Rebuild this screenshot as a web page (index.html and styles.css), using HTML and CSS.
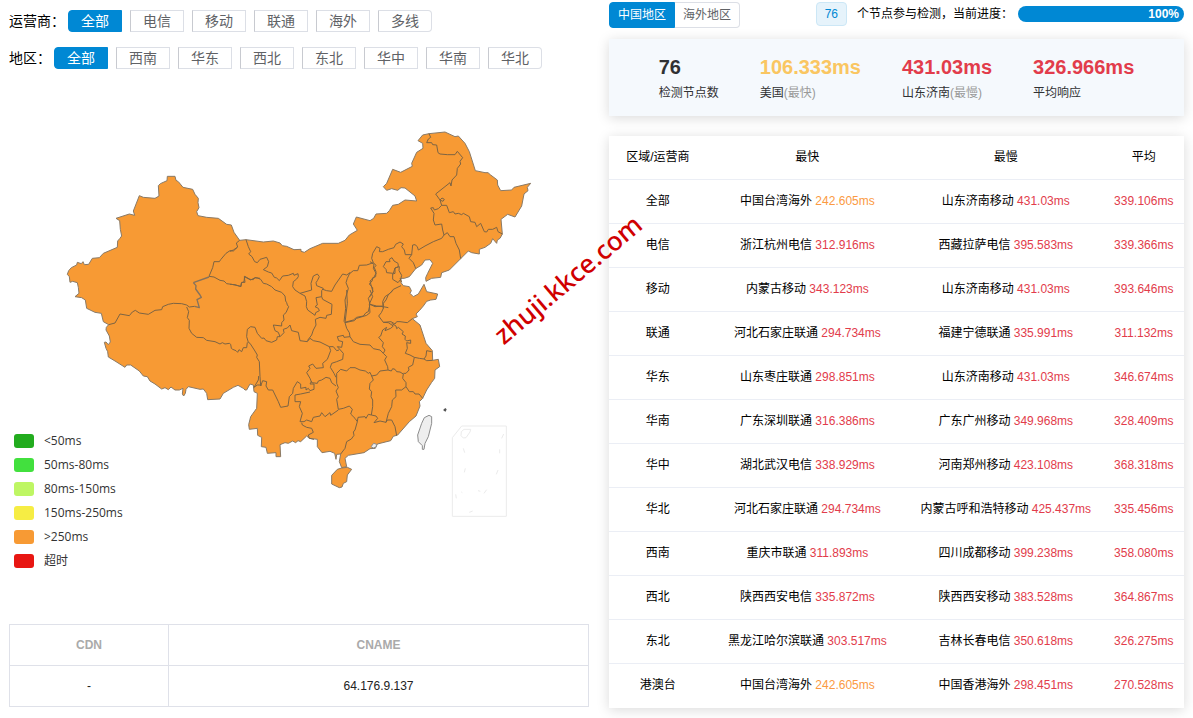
FILE: index.html
```html
<!DOCTYPE html>
<html lang="zh-CN">
<head>
<meta charset="utf-8">
<title>节点检测</title>
<link rel="stylesheet" href="styles.css">
</head>
<body>
<main class="page">
  <section class="left">
    <div class="filter">
      <span class="filter-label">运营商：</span>
      <div class="options">
        <button class="option active">全部</button><button class="option">电信</button><button class="option">移动</button><button class="option">联通</button><button class="option">海外</button><button class="option">多线</button>
      </div>
    </div>
    <div class="filter">
      <span class="filter-label">地区：</span>
      <div class="options">
        <button class="option active">全部</button><button class="option">西南</button><button class="option">华东</button><button class="option">西北</button><button class="option">东北</button><button class="option">华中</button><button class="option">华南</button><button class="option">华北</button>
      </div>
    </div>
    <div class="map">
      <svg class="map-svg" viewBox="27 258 1740 1560" role="img" aria-label="中国地图">
        <path class="land" d="M202 823L206 812 214 803 230 795 232 787 244 791 249 785 253 794 266 793 277 775 298 773 310 760 352 742 353 723 359 716 365 708 361 688 359 662 348 655 388 642 404 646 400 633 418 587 430 592 465 595 477 588 475 557 481 551 501 542 502 529 525 529 528 541 535 545 549 562 578 568 585 583 595 595 594 608 597 623 590 635 594 647 620 652 655 655 680 673 694 675 702 697 719 721 738 719 790 726 820 723 840 729 847 737 860 739 882 749 903 748 903 754 913 757 930 746 968 730 1015 730 1035 721 1048 705 1072 691 1060 672 1069 651 1110 662 1121 655 1128 642 1160 640 1168 632 1178 616 1195 613 1215 600 1250 603 1245 588 1215 564 1203 563 1193 571 1175 566 1160 571 1150 560 1160 550 1178 508 1202 517 1237 499 1235 490 1250 457 1269 445 1268 430 1254 422 1268 405 1287 401 1335 396 1365 410 1375 408 1395 430 1408 455 1426 512 1455 518 1464 518 1472 525 1492 540 1493 555 1502 572 1535 570 1542 562 1592 550 1582 562 1584 572 1572 582 1565 618 1545 651 1523 643 1503 658 1507 702 1500 715 1492 720 1490 730 1478 716 1472 730 1455 742 1438 748 1438 762 1415 758 1405 753 1382 776 1348 810 1325 818 1322 832 1295 835 1278 844 1277 833 1283 820 1298 790 1290 779 1275 780 1265 795 1247 806 1228 830 1213 835 1203 835 1203 848 1210 857 1228 860 1234 872 1230 880 1240 890 1255 882 1272 853 1280 875 1313 882 1308 898 1292 900 1280 904 1270 918 1258 932 1248 942 1252 950 1237 956 1260 975 1278 1030 1297 1052 1298 1081 1315 1078 1319 1100 1305 1110 1304 1135 1295 1147 1280 1170 1268 1195 1258 1205 1260 1218 1248 1248 1228 1265 1193 1305 1180 1309 1172 1322 1132 1332 1126 1345 1110 1346 1092 1358 1045 1366 1035 1375 1040 1400 1025 1403 1018 1385 1022 1362 1010 1363 1008 1378 1004 1360 990 1354 966 1358 952 1340 952 1318 928 1315 920 1308 902 1325 894 1322 887 1328 878 1323 865 1330 855 1328 840 1334 842 1370 828 1370 828 1358 802 1360 798 1342 784 1340 785 1312 773 1306 772 1285 748 1288 746 1274 752 1250 770 1225 772 1180 762 1175 760 1155 750 1152 740 1170 735 1170 730 1165 714 1156 700 1162 670 1180 660 1197 623 1199 620 1180 610 1167 600 1168 565 1160 558 1168 556 1180 551 1188 547 1182 549 1165 538 1170 525 1170 513 1161 505 1169 495 1163 485 1167 465 1152 450 1143 442 1130 430 1128 418 1113 392 1095 380 1095 375 1102 345 1083 325 1071 323 1055 318 1045 313 1027 318 1026 325 1034 331 1026 328 1008 318 990 319 982 326 974 310 965 304 940 285 937 260 925 256 900 245 893 225 890 237 880 235 862 232 848 218 844 210 847 208 830Z"/>
        <g class="border" transform="translate(180 495)">
          <path d="M539 226L529 234 533 246 520 258 510 257 498 265 482 284 478 290 462 290 458 308 447 334M404 424L388 426 380 420 365 416 340 415 325 418 308 425 305 434 285 436 265 448 238 444 226 436 217 441 208 452 180 447 165 474 146 479M380 426L386 440 382 458 388 466 387 490 395 505 410 517 430 518 440 526 465 530 480 537 487 533 495 537 508 535 512 538 514 550 518 553 528 557 533 562 537 554 545 560 550 548 560 548 562 532M447 334L462 336 480 346 492 348 500 356 515 358 542 364 544 354 552 350 554 334 570 343 580 344 585 338 600 340"/>
          <path class="soft" d="M447 336L400 353M400 353L408 362 407 372 420 390 424 397 411 404 418 428 404 424"/>
        </g>
        <g class="border" transform="translate(690 360)">
          <path d="M0 493L15 494 33 500 35 487 45 487 43 470 62 480 75 473 82 474 92 478 100 490 110 492 125 500 135 510 155 517 165 528 167 543 170 548 172 555 176 560 168 578 160 585 162 600 155 608 155 618M48 359L55 380 62 395 56 402 66 410 74 425 82 428 90 418 110 412 116 425 112 440 100 449 115 456 125 459 133 472 140 474 148 482 158 468 175 466 190 460 192 466 204 461 205 470 200 477 190 485 188 500 195 510 210 520L225 528 230 545 229 560 233 570 240 575 255 586 257 578 268 572 265 565 255 560 262 555 258 533 275 530 275 512 280 505 260 497 258 488 262 482 268 470 262 462 250 468 243 490 245 510 210 520M0 394L10 390 22 382M275 530L278 538 306 553 304 583 290 586 288 595 270 592 256 598 258 615 250 630M278 508L290 512 305 514 315 495 338 462 350 465 360 458L352 475 348 488 355 505 345 540 347 565 342 605M360 460L370 452 383 452 388 436 410 435 430 428 438 436 433 443 438 455 437 470 427 474 427 482 418 492 428 503 428 515 415 535 420 553 415 575 408 578 400 588 380 592 370 600 344 607M420 553L440 558 460 560 475 563"/>
        </g>
        <g class="border" transform="translate(1110 360)">
          <path d="M10 428L5 415 8 400 20 380 30 385 28 395 38 395 55 388 72 383 77 373 90 366 100 372 95 380 103 390 106 404 125 404L117 415 130 428 135 440 137 446M125 404L128 375 135 374 142 380 145 390 165 378 190 365 215 355 222 345L232 338 240 350 252 350 258 370 268 390 272 416M222 345L218 330 215 312 195 315 190 300 192 280 182 264 190 263 193 270 205 266 215 256 230 256 238 278 250 275 255 282 265 280 275 284 280 280 298 290 302 305 315 307 320 320 332 310 343 335 350 336 355 328 368 328 380 322 384 335 397 342M215 256L210 240 197 222 240 188 243 198 246 180 260 165 262 145 272 132 270 124 278 113 262 94 255 104 232 104 210 102 204 98 200 75 188 74 185 68 170 68 175 57 182 52 177 41M210 240l6-6 7 4-4 6zM60 425L58 418 66 413 72 423 84 430 85 440 75 444 70 460 50 458 48 448 40 440 48 425zM75 444L88 440 87 452 95 466 92 478 84 488 68 478 68 462 75 460zM93 497L70 508 60 520 45 530 38 545 40 566M90 475L95 487M0 425L12 433 10 445 18 460 10 475 0 483 3 495 9 515 0 530"/>
        </g>
        <g class="border" transform="translate(960 870)">
          <path d="M190 55L184 68 176 78 190 97 205 98M220 0L205 14 198 30 190 40 190 55M190 97L213 95 225 102 230 95 240 95 262 98 277 86M148 42L165 50 188 48M148 42L150 68 140 76 110 85 103 92 75 98 80 115 88 128 90 140 100 155 120 163 150 165 160 176 180 180 190 190 195 180 187 170 190 158 176 142 182 138 188 120 200 112 195 122 212 115 220 108 205 98M215 100L228 108 230 116 235 112 250 125 246 132 256 138 255 148 260 153 272 150 272 160 260 158 262 175 256 190 270 195 283 202 298 205 312 207 320 212 338 211M312 207L318 198 320 182 335 185M283 202L278 225 265 232 267 240 258 250 250 250M190 190L200 200 194 210 203 230 204 240 214 243 218 236 225 238 230 245 240 246 250 252 248 265 258 278 258 290 268 305 280 305 285 312 297 312 308 325M204 240L180 243 170 255 155 258 150 247 145 250 136 243 120 240 105 233 90 233 80 243 62 238 50 250M90 140L72 142 70 136 52 140 56 152 68 155 65 172 52 170 70 190 68 208 50 215 35 220 31 232 42 250 48 262M50 250L50 280 55 293 48 303 55 320 50 328 55 358M155 258L160 270 150 280 148 297 155 305 153 320 158 330 158 350 154 375M55 358L70 355 88 348 97 358 92 372 105 385 112 395 114 382 135 380 138 385 145 373 154 375 168 378 173 385 162 398 180 393 198 397 205 370 215 350 217 330 228 320 227 300 245 300 258 290M112 395L105 420 100 426 102 436 94 447 80 455 75 475 62 492M198 397L202 390 215 390 225 410 230 437M75 98L82 40 80 0M150 0L158 20 148 42"/>
        </g>
        <g class="border" transform="translate(690 900)">
          <path d="M55 127L50 110 52 88 62 80 75 82 82 100 95 115 102 114 108 122 125 127 140 120 142 110 150 110 145 97 135 92 130 75 155 78M150 110L162 98 160 88 172 84 180 75 185 92 205 97 210 122 232 125 240 115 250 122 270 126 298 140 310 140 320 152 327 150M250 90L245 105 232 122M55 127L60 130 73 150 82 165 80 172 88 185 90 230 92 258M86 228L85 240 72 262 82 255 95 255M298 140L302 152 292 178 278 190 280 203 258 205 248 192 236 198 240 205 230 218 240 235 245 248 262 250 265 243 275 240 288 232 300 235 305 248 318 258M245 243L240 252 252 252 252 268 240 272 235 265 228 270 228 262 212 265 212 252 202 245 190 265 188 280 178 290 174 318 152 322 145 305 128 270 115 270 108 258 110 245 98 242 92 258M240 276L212 282 195 285 195 305 212 305 208 320 217 340 210 365 222 365 230 360 245 365 250 352 270 348 275 338 285 350 300 338 302 346 325 330M215 368L217 375 230 382 245 385 250 397 235 405 238 415 252 418"/>
        </g>
        <g transform="translate(960 870)">
          <path class="land" d="M95 538L82 555 80 575 70 580 66 591 58 593 35 582 35 556 52 538 65 534 82 532z"/>
          <path class="empty" d="M327 376L335 380 335 400 325 440 315 460 312 478 307 478 307 467 295 455 293 435 305 400 313 383z"/>
          <path class="empty" d="M153 470L161 460 170 463 168 471 160 474z"/>
          <path class="islet" d="M370 359l6-5 4 4-3 7-6-3z"/>
          <path class="inset" d="M425 408H559V679H397V443zM424 425l8-7 20 0-2 8-12 17-8 1-7-7zM551 432l-6 13M430 475l4 13M539 478v12M436 535l-3 12M534 540l-5 13M407 613l2 12M424 606l3 2M474 602l7 2M500 599l-8 11M448 667l10-4"/>
        </g>
      </svg>
      <ul class="legend">
        <li><i class="swatch c50"></i>&lt;50ms</li>
        <li><i class="swatch c80"></i>50ms-80ms</li>
        <li><i class="swatch c150"></i>80ms-150ms</li>
        <li><i class="swatch c250"></i>150ms-250ms</li>
        <li><i class="swatch cmax"></i>&gt;250ms</li>
        <li><i class="swatch cout"></i>超时</li>
      </ul>
    </div>
    <table class="cname">
      <thead><tr><th class="cdn">CDN</th><th>CNAME</th></tr></thead>
      <tbody><tr><td>-</td><td>64.176.9.137</td></tr></tbody>
    </table>
  </section>

  <section class="right">
    <div class="toolbar">
      <div class="tabs"><button class="tab active">中国地区</button><button class="tab">海外地区</button></div>
      <div class="status">
        <span class="tag">76</span>
        <span class="status-text">个节点参与检测，当前进度：</span>
        <div class="progress">100%</div>
      </div>
    </div>
    <div class="summary">
      <div><strong>76</strong><p>检测节点数</p></div>
      <div><strong class="gold">106.333ms</strong><p>美国<span>(最快)</span></p></div>
      <div><strong class="slow">431.03ms</strong><p>山东济南<span>(最慢)</span></p></div>
      <div><strong class="slow">326.966ms</strong><p>平均响应</p></div>
    </div>
    <table class="results">
      <thead><tr><th class="w-area">区域/运营商</th><th class="w-fast">最快</th><th class="w-slow">最慢</th><th>平均</th></tr></thead>
      <tbody>
        <tr><td>全部</td><td>中国台湾海外 <b class="mid">242.605ms</b></td><td>山东济南移动 <b>431.03ms</b></td><td><b>339.106ms</b></td></tr>
        <tr><td>电信</td><td>浙江杭州电信 <b>312.916ms</b></td><td>西藏拉萨电信 <b>395.583ms</b></td><td><b>339.366ms</b></td></tr>
        <tr><td>移动</td><td>内蒙古移动 <b>343.123ms</b></td><td>山东济南移动 <b>431.03ms</b></td><td><b>393.646ms</b></td></tr>
        <tr><td>联通</td><td>河北石家庄联通 <b>294.734ms</b></td><td>福建宁德联通 <b>335.991ms</b></td><td><b>311.132ms</b></td></tr>
        <tr><td>华东</td><td>山东枣庄联通 <b>298.851ms</b></td><td>山东济南移动 <b>431.03ms</b></td><td><b>346.674ms</b></td></tr>
        <tr><td>华南</td><td>广东深圳联通 <b>316.386ms</b></td><td>广东广州移动 <b>349.968ms</b></td><td><b>328.409ms</b></td></tr>
        <tr><td>华中</td><td>湖北武汉电信 <b>338.929ms</b></td><td>河南郑州移动 <b>423.108ms</b></td><td><b>368.318ms</b></td></tr>
        <tr><td>华北</td><td>河北石家庄联通 <b>294.734ms</b></td><td>内蒙古呼和浩特移动 <b>425.437ms</b></td><td><b>335.456ms</b></td></tr>
        <tr><td>西南</td><td>重庆市联通 <b>311.893ms</b></td><td>四川成都移动 <b>399.238ms</b></td><td><b>358.080ms</b></td></tr>
        <tr><td>西北</td><td>陕西西安电信 <b>335.872ms</b></td><td>陕西西安移动 <b>383.528ms</b></td><td><b>364.867ms</b></td></tr>
        <tr><td>东北</td><td>黑龙江哈尔滨联通 <b>303.517ms</b></td><td>吉林长春电信 <b>350.618ms</b></td><td><b>326.275ms</b></td></tr>
        <tr><td>港澳台</td><td>中国台湾海外 <b class="mid">242.605ms</b></td><td>中国香港海外 <b>298.451ms</b></td><td><b>270.528ms</b></td></tr>
      </tbody>
    </table>
  </section>
  <div class="watermark">zhuji.kkce.com</div>
</main>
</body>
</html>
```
FILE: styles.css
```css
* { box-sizing: border-box; }
body {
  margin: 0;
  background: #fff;
  color: #000;
  font: 12px/18px "Liberation Sans", "Noto Sans CJK SC", sans-serif;
}
button { font: inherit; cursor: pointer; margin: 0; }
p, ul { margin: 0; padding: 0; }

.page {
  position: relative;
  display: grid;
  grid-template-columns: 580fr 575fr;
  gap: 20px;
  padding: 2px 9px 10px;
}

/* filters */
.left { padding-top: 8px; }
.filter {
  display: flex;
  align-items: center;
  gap: 3px;
  margin-bottom: 15px;
  font-size: 14px;
  line-height: 20px;
}
.filter-label { white-space: nowrap; }
.options { display: flex; flex-wrap: wrap; gap: 8px; }
.option {
  width: 54px;
  height: 22px;
  padding: 0;
  border: 1px solid #dcdfe6;
  border-left-color: #c8cad0;
  border-radius: 0;
  background: #fff;
  color: #606266;
  line-height: 20px;
}
.option.active { background: #0088d4; border-color: #0088d4; color: #fff; }
.option:first-child { border-radius: 4px 0 0 4px; }
.option:last-child { border-radius: 0 4px 4px 0; }

/* map */
.map { position: relative; margin-top: 17px; }
.map-svg { display: block; width: 100%; height: auto; }
.land { fill: #f79a34; stroke: #8a7a66; stroke-width: 3; stroke-linejoin: round; }
.border path { fill: none; stroke: #7d6443; stroke-width: 3; stroke-linejoin: round; }
.border .soft { stroke: #85725c; stroke-width: 4; }
.empty { fill: #eee; stroke: #8c8c8c; stroke-width: 3; }
.islet { fill: #555; }
.inset { fill: none; stroke: #ebebeb; stroke-width: 3; }
.legend {
  position: absolute;
  left: 5px;
  bottom: 33px;
  list-style: none;
  color: #333;
  font: 12px/24px "Open Sans", "Noto Sans CJK SC", sans-serif;
}
.legend li { display: flex; align-items: center; gap: 10px; }
.swatch { width: 20px; height: 14px; border-radius: 3px; }
.c50 { background: #22ac1e; }
.c80 { background: #42e03e; }
.c150 { background: #bef663; }
.c250 { background: #f6ed44; }
.cmax { background: #f79a34; }
.cout { background: #e81612; }

/* cname table */
.cname {
  width: 100%;
  margin-top: 18px;
  border-collapse: collapse;
  text-align: center;
  table-layout: fixed;
}
.cname th, .cname td { height: 41px; padding: 0; border: 1px solid #dfe1e9; }
.cname th { color: #aaa; }
.cdn { width: 159px; }
.cname td { color: #222; }

/* right column */
.toolbar { display: flex; justify-content: space-between; align-items: flex-start; }
.tabs { display: flex; }
.tab {
  height: 26px;
  padding: 0 8px;
  border: 1px solid #dcdfe6;
  border-left: 0;
  border-radius: 0 4px 4px 0;
  background: #fff;
  color: #606266;
}
.tab.active {
  border: 1px solid #0088d4;
  border-radius: 4px 0 0 4px;
  background: #0088d4;
  color: #fff;
}
.status { display: flex; align-items: center; gap: 10px; white-space: nowrap; }
.tag {
  padding: 0 8px;
  border: 1px solid #cce7f6;
  border-radius: 4px;
  background: #e6f3fb;
  color: #0088d4;
  line-height: 22px;
}
.status-text { margin-right: -5px; }
.progress {
  width: 166px;
  padding-right: 5px;
  border-radius: 8px;
  background: #0088d4;
  color: #fff;
  font-weight: bold;
  line-height: 16px;
  text-align: right;
}
.summary {
  display: flex;
  justify-content: center;
  gap: 41px;
  margin: 11px 0 20px;
  padding: 16px 0 11px;
  background: #f5f9fd;
  box-shadow: 0 2px 12px rgba(0, 0, 0, 0.15);
  color: #303133;
}
.summary strong { display: block; font-size: 20px; line-height: 24px; }
.summary p { padding-top: 3px; line-height: 23px; }
.summary span { color: #999; }
.summary .gold { color: #fac661; }
.summary .slow { color: #e23c4b; }

.results {
  width: 100%;
  border-collapse: separate;
  border-spacing: 0;
  table-layout: fixed;
  box-shadow: 0 2px 12px rgba(0, 0, 0, 0.15);
  text-align: center;
  white-space: nowrap;
}
.results th, .results td {
  height: 44px;
  padding: 0 0 1px;
  border-bottom: 1px solid #ebeef5;
  font-weight: normal;
}
.results tbody tr:last-child td { border-bottom-color: transparent; }
.results b { font-weight: normal; color: #e23c4b; }
.results .mid { color: #fb9a42; }
.w-area { width: 17%; }
.w-fast { width: 35%; }
.w-slow { width: 34%; }

.watermark {
  position: absolute;
  left: 476px;
  top: 259px;
  color: #d00000;
  font: 500 26px/40px "Noto Sans", sans-serif;
  transform: rotate(-40deg);
  pointer-events: none;
}
```
